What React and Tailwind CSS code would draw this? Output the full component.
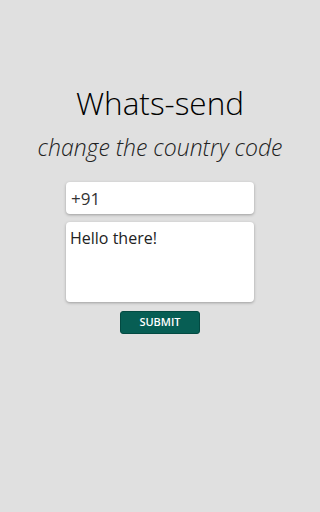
import React, { useState } from 'react'

const App = () => {
  const [code, setCode] = useState('+91')
  const [message, setMessage] = useState('Hello there!')

  return (
    <div
      className="min-h-screen w-full bg-[#e0e0e0] flex flex-col items-center pt-[82px] overflow-hidden"
      style={{ fontFamily: '"Open Sans", "Noto Sans", sans-serif' }}
    >
      <h1 className="text-[31.5px] leading-[42px] font-light text-black">Whats-send</h1>
      <p className="mt-[8px] text-[23px] leading-[30px] font-light italic text-[#222]">
        change the country code
      </p>
      <form className="mt-[20px] flex flex-col items-center" onSubmit={e => e.preventDefault()}>
        <input
          value={code}
          onChange={e => setCode(e.target.value)}
          className="w-[188px] h-[32px] rounded-[4px] bg-white px-[5px] text-[17px] text-[#333] shadow-[0_1px_3px_rgba(0,0,0,0.3)] outline-none"
        />
        <textarea
          value={message}
          onChange={e => setMessage(e.target.value)}
          className="mt-[8px] w-[188px] h-[80px] rounded-[4px] bg-white px-[4px] py-[6px] text-[16px] leading-[20px] text-[#222] shadow-[0_1px_3px_rgba(0,0,0,0.3)] outline-none resize-none"
        />
        <button
          type="submit"
          className="mt-[9px] w-[80px] h-[23px] rounded-[3px] bg-[#075e54] text-white text-[11px] font-semibold border border-[#034a42]"
        >
          SUBMIT
        </button>
      </form>
    </div>
  )
}

export default App
